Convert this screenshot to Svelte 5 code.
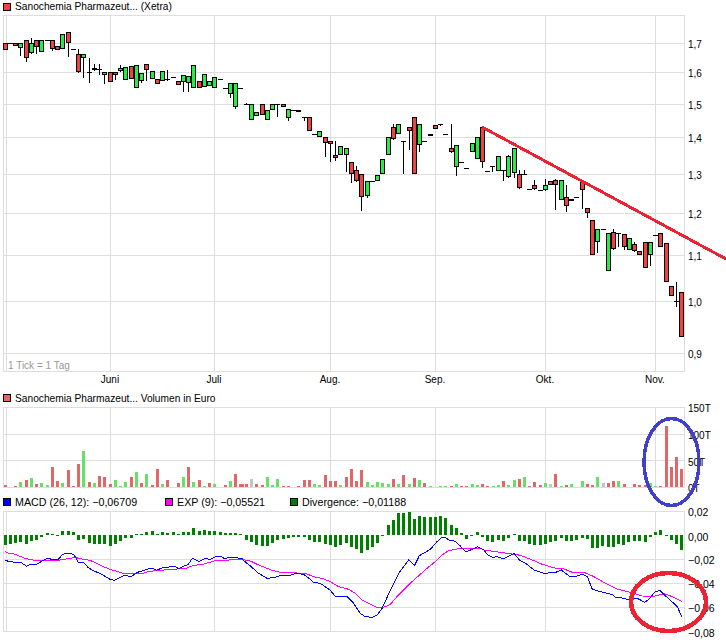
<script>
  // Readings are in 3x zoom coordinates per strip: [ox, oy, items]
  const candleStrips = [
    [0, 0, [
      ['r',16,130,151],['d',31,130],['r',46,130,139],['g',62,130,145,130,165],['r',79,121,175,121,182],
      ['g',94,130,160,114,160],['r',109,121,142,121,160],['g',124,121,157],['d',142,121],['r',157,121,148,121,151],
      ['r',172,139,151],['g',187,103,148],['r',205,97,130,97,169],['d',220,148],['r',235,163,217,148,217],
      ['g',250,163,175,163,230],['d',268,217,175,250],['D',283,205,193,214],['d',298,208,193,226],['g',313,217,226,217,250],
      ['r',331,217,247],['r',346,217,226,217,238],['g',361,205,214,196,214],['g',376,202,241],['r',394,199,238],
      ['g',409,196,265],['g',424,220,244,220,247],['r',439,193,211,193,241],['g',457,214,238],['r',472,238,253],
      ['g',487,214,244],['d',502,238,211,244],['d',520,232],['r',535,244,256],['g',550,226,247,226,274],
      ['g',565,229,250,229,274],['g',580,196,265],['r',598,244,265],['g',613,223,262],['g',628,244,259],
      ['g',643,232,265],['d',661,238],['d',676,265],['g',691,250,283,250,292],['g',706,250,322,250,325],['d',721,265]
    ]],
    [242, 90, [
      ['d',13,43,39,43],['g',28,43,91],['g',43,67,79],['r',61,43,76],['g',76,61,91],['g',91,43,61],
      ['d',106,43,43,80],['r',124,43,52],['g',139,58,85,58,89],['d',154,61],['D',169,62],['d',187,82,82,92],
      ['r',202,82,124],['d',217,133],['g',232,124,142],['r',250,142,160,142,197],['r',265,154,163,154,212],
      ['r',280,196,205,154,209],['g',295,169,196],['g',313,175,196,175,242],['r',328,217,253,217,275],
      ['r',343,241,274,228,274],['r',358,253,322,253,359],['g',376,274,319,274,322],['d',391,274],
      ['g',406,256,274],['g',421,208,253],['g',439,142,196],['r',454,112,148,102,148],['g',469,103,133],
      ['d',484,154,154,253],['r',502,112,124,112,176],['r',517,82,253],['g',532,103,166,103,183],['d',547,154],
      ['D',565,134],['r',580,106,118],['d',595,103,103,107],['d',610,133],['r',628,175,187,102,187],
      ['g',643,166,232,166,254],['d',658,217],['d',673,235],['g',691,160,187],['g',706,142,208],['r',721,112,217,112,230]
    ]],
    [484, 110, [
      ['d',10,185],['d',25,170,170,185],['g',43,139,184],['d',58,182,182,212],['g',73,139,202,135,202],
      ['g',91,115,190,115,202],['r',106,193,235,181,235],['d',121,193,181,196],['d',136,238],['r',151,226,238,211,238],
      ['d',169,241],['g',184,226,241,208,241],['r',199,214,226],['r',214,211,226,208,298],['g',232,211,271],
      ['r',247,262,289,226,304],['D',262,268],['d',277,262],['r',295,214,241,214,295],['r',310,295,310,295,322]
    ]],
    [560, 220, [
      ['r',97,0,106],['g',112,28,67,28,95],['d',130,28],['g',145,40,154],['r',160,37,88,28,88],
      ['d',175,40,40,80],['r',193,43,82,43,86],['g',208,55,91],['r',223,73,94,67,94],['r',238,94,106],
      ['r',256,67,145],['g',271,67,106,67,134],['d',286,46],['r',301,40,82],['r',319,70,187],
      ['r',334,199,229],['d',349,244,186,260],['r',364,217,352]
    ]]
  ];

  const candles = candleStrips.flatMap(([ox, oy, items]) =>
    items.map(([kind, z, a, b, c, d]) => {
      const x = Math.floor(ox + z / 3);
      if (kind === 'd' || kind === 'D') {
        const y = Math.floor(oy + a / 3);
        return {
          kind, x, y,
          wt: b !== undefined ? Math.floor(oy + b / 3) : null,
          wb: c !== undefined ? Math.round(oy + c / 3) : null
        };
      }
      const top = Math.floor(oy + a / 3);
      const bot = Math.round(oy + b / 3) - 1;
      return {
        kind, x, top, bot,
        wt: c !== undefined ? Math.floor(oy + c / 3) : top,
        wb: d !== undefined ? Math.round(oy + d / 3) : bot
      };
    })
  );

  const volStrips = [
    [0, 385, 307, [
      [16,'r',300],[46,'r',303],[61,'g',291],[79,'r',285],[94,'g',279],[109,'r',297],[124,'g',294],[142,'g',300],
      [157,'r',246],[172,'r',288],[187,'g',294],[205,'r',255],[220,'r',303],[235,'r',237],[250,'g',198],[268,'r',291],
      [283,'g',294],[298,'r',273],[313,'r',276],[331,'r',297],[346,'g',285],[361,'g',303],[376,'g',291],[394,'r',276],
      [409,'g',261],[424,'r',294],[439,'g',267],[457,'r',300],[472,'r',252],[487,'g',297],[502,'r',285],[535,'r',294],
      [550,'g',276],[565,'r',246],[580,'g',291],[598,'r',285],[613,'g',303],[628,'r',294],[643,'g',297],[676,'r',300],
      [691,'g',288],[706,'r',267],[721,'r',297]
    ]],
    [242, 450, 112, [
      [1,'r',102],[14,'r',102],[28,'y',87],[43,'r',102],[61,'r',105],[76,'g',81],[91,'g',105],[106,'g',87],[124,'r',108],
      [139,'r',108],[169,'r',108],[187,'r',90],[202,'r',90],[217,'g',102],[232,'g',105],[250,'r',75],[265,'r',93],
      [280,'r',93],[295,'g',105],[313,'r',81],[328,'r',57],[343,'r',93],[358,'r',60],[376,'g',96],[391,'g',105],
      [406,'g',96],[421,'g',99],[439,'g',102],[454,'r',87],[469,'g',102],[484,'r',75],[502,'g',102],[517,'r',84],
      [532,'g',90],[547,'r',99],[565,'g',108],[595,'g',108],[610,'g',108],[628,'r',108],[643,'g',102],[658,'r',108],
      [673,'r',108],[691,'g',102],[706,'g',105],[721,'r',102]
    ]],
    [484, 400, 262, [
      [10,'r',258],[28,'g',258],[43,'g',255],[58,'r',243],[73,'g',255],[91,'g',240],[106,'r',237],[121,'g',231],
      [136,'r',258],[151,'r',246],[169,'r',255],[184,'g',249],[199,'y',252],[214,'r',222],[232,'g',258],[247,'r',255],
      [262,'g',252],[295,'g',243],[310,'r',252],[325,'r',255],[340,'g',231],[358,'y',249],[373,'r',249],[388,'r',243],
      [403,'g',243],[421,'r',252],[451,'r',252],[466,'r',255],[484,'r',255],[499,'g',249],[514,'g',258],[529,'r',258],
      [547,'r',78],[562,'r',201],[577,'r',171],[592,'r',207]
    ]]
  ];

  const volBars = volStrips.flatMap(([ox, oy, base, items]) =>
    items.map(([z, c, t]) => {
      const top = Math.round(oy + t / 3);
      return { x: Math.floor(ox + z / 3) - 1, y: top, h: Math.max(1, 487 - top), c };
    })
  );

  // Divergence: signed value = end of the bar in zoom px, relative to the strip
  const divStrips = [
    [0, [[16,75],[31,72],[46,70],[61,67],[79,72],[94,64],[109,61],[124,52],[142,39],[157,42],[172,45],[187,33],[205,33],
      [220,36],[235,60],[250,57],[268,69],[283,72],[298,72],[313,72],[331,78],[346,72],[361,63],[376,55],[394,54],[409,42],
      [424,42],[439,36],[457,33],[472,42],[487,36],[502,39],[520,36],[535,42],[550,36],[565,36],[580,24],[598,33],[613,30],
      [628,33],[643,33],[661,36],[676,39],[691,39],[706,39],[721,42]]],
    [242, [[13,60],[28,67],[43,75],[61,78],[76,78],[91,69],[106,60],[124,57],[139,54],[154,51],[169,51],[187,51],[202,60],
      [217,66],[232,66],[250,72],[265,75],[280,81],[295,75],[313,69],[328,81],[343,87],[358,99],[376,90],[391,81],[406,69],
      [421,48],[439,15],[454,0],[469,-20],[484,-21],[502,-25],[517,-2],[532,-12],[547,-10],[565,-9],[580,-9],[595,-12],
      [610,-5],[628,15],[643,24],[658,39],[673,57],[688,48],[706,36],[721,51]]],
    [484, [[10,63],[25,66],[43,60],[58,63],[73,54],[91,42],[106,63],[121,63],[136,72],[151,75],[169,75],[184,72],[199,66],
      [214,63],[232,54],[247,63],[262,63],[277,60],[295,54],[310,57],[325,84],[340,84],[355,78],[373,81],[388,81],[403,72],
      [418,75],[433,66],[451,63],[466,63],[484,66],[499,51],[514,36],[529,30],[547,45],[562,60],[577,72],[592,90]]]
  ];

  const divBars = divStrips.flatMap(([ox, items]) =>
    items.map(([z, v]) => {
      const end = Math.round(520 + v / 3);
      const y = Math.min(535, end);
      return { x: Math.floor(ox + z / 3) - 1, y, h: Math.max(1, Math.abs(end - 535)) };
    })
  );

  const toPts = (ox, arr) => arr.map(([x, y]) => `${ox + x / 3},${520 + y / 3}`).join(' ');

  const macd = [
    toPts(0, [[15,120],[25,124],[38,124],[40,127],[62,127],[70,132],[80,139],[92,133],[108,133],[120,127],[135,118],[145,115],[155,118],[175,118],[188,103],[200,100],[212,100],[222,104],[235,127],[250,127],[265,143],[278,151],[305,163],[330,178],[342,181],[355,175],[370,167],[382,167],[390,170],[398,167],[412,157],[430,152],[445,147],[460,146],[470,151],[490,142],[505,142],[515,139],[525,139],[535,146],[550,139],[565,133],[577,115],[585,118],[597,124],[615,115],[630,118],[650,109],[662,109],[672,115],[700,112],[726,116]]),
    toPts(242, [[0,118],[25,138],[50,160],[75,175],[100,172],[115,167],[145,166],[160,160],[185,163],[205,178],[215,187],[235,190],[265,211],[280,229],[315,229],[335,250],[355,280],[370,290],[390,292],[405,286],[420,266],[445,210],[470,160],[500,120],[518,136],[532,107],[565,88],[585,65],[600,52],[610,53],[622,60],[640,64],[655,78],[672,96],[690,88],[707,80],[726,90]]),
    toPts(484, [[10,104],[25,112],[40,110],[58,117],[75,108],[90,100],[108,122],[125,130],[150,150],[180,160],[215,157],[232,150],[255,168],[275,170],[295,162],[310,170],[325,208],[350,215],[385,224],[395,233],[410,233],[430,238],[460,235],[482,247],[498,235],[512,216],[527,211],[545,228],[580,260],[593,290]])
  ].join(' ');

  const exp = [
    toPts(0, [[15,94],[25,99],[48,103],[60,109],[75,115],[100,120],[125,122],[175,121],[190,118],[212,115],[225,112],[240,116],[270,121],[290,130],[310,140],[330,148],[350,154],[370,160],[400,160],[430,160],[448,154],[480,151],[530,147],[560,144],[580,136],[605,134],[625,128],[650,121],[680,121],[700,118],[726,118]]),
    toPts(242, [[25,123],[50,135],[90,151],[115,157],[190,160],[215,170],[240,175],[265,185],[290,200],[320,208],[340,220],[360,240],[385,252],[405,262],[425,262],[445,253],[465,230],[510,185],[555,145],[580,125],[600,105],[620,92],[655,85],[690,87],[712,84],[726,90]]),
    toPts(484, [[50,97],[110,106],[145,120],[175,133],[215,145],[240,147],[265,157],[300,157],[330,170],[365,190],[400,207],[440,217],[475,228],[510,229],[540,221],[565,230],[593,244]])
  ].join(' ');

  const gridX = [3, 6, 110, 214, 330, 435, 545, 655, 684];
  const priceY = [15, 43, 72, 104, 137, 174, 213, 255, 301, 353, 371];
  const volY = [407, 434, 460, 487];
  const macdY = [511, 559, 583, 607, 631];

  const priceLabels = [['1,7',48],['1,6',77],['1,5',109],['1,4',142],['1,3',179],['1,2',218],['1,1',260],['1,0',306],['0,9',358]];
  const volLabels = [['150T',412],['100T',439],['50T',466],['0T',492]];
  const macdLabels = [['0,02',516],['0,00',541],['−0,02',564],['−0,04',588],['−0,06',612],['−0,08',637]];
  const months = [['Juni',110],['Juli',214],['Aug.',330],['Sep.',435],['Okt.',545],['Nov.',655]];
</script>

<div class="chart">
  <div class="legend first">
    <span class="item"><i class="swatch s-red"></i>Sanochemia Pharmazeut... (Xetra)</span>
  </div>

  <svg class="panel" width="726" height="375" viewBox="0 15 726 375">
    {#each priceY as y}<line class="grid" x1="3" x2="684" y1={y + 0.5} y2={y + 0.5} />{/each}
    {#each gridX as x}<line class="grid" x1={x + 0.5} x2={x + 0.5} y1="15" y2="372" />{/each}

    {#each candles as c}
      {#if c.kind === 'd' || c.kind === 'D'}
        {#if c.wt !== null}<line class="ink" x1={c.x + 0.5} x2={c.x + 0.5} y1={c.wt} y2={c.wb} />{/if}
        <rect class="fill-ink" x={c.x - 2} y={c.y} width="5" height={c.kind === 'D' ? 2 : 1} />
      {:else}
        <line class="ink" x1={c.x + 0.5} x2={c.x + 0.5} y1={c.wt} y2={c.wb + 1} />
        <rect class={c.kind === 'r' ? 'body-red' : 'body-green'} x={c.x - 1.5} y={c.top + 0.5} width="4" height={c.bot - c.top} />
      {/if}
    {/each}

    <line class="trend" x1="482" y1="127" x2="726" y2="259" />

    <text class="note" x="8" y="369">1 Tick = 1 Tag</text>
    {#each priceLabels as [t, y]}<text class="axis" x="688" {y}>{t}</text>{/each}
    {#each months as [t, x]}<text class="axis mid" {x} y="383">{t}</text>{/each}
  </svg>

  <div class="legend second">
    <span class="item"><i class="swatch s-vol"></i>Sanochemia Pharmazeut... Volumen in Euro</span>
  </div>

  <svg class="panel" width="726" height="90" viewBox="0 405 726 90">
    {#each volY as y}<line class="grid" x1="3" x2="684" y1={y + 0.5} y2={y + 0.5} />{/each}
    {#each gridX as x}<line class="grid" x1={x + 0.5} x2={x + 0.5} y1="407" y2="488" />{/each}
    {#each volBars as b}
      <rect class={'vol-' + b.c} x={b.x} y={b.y} width="3" height={b.h} />
    {/each}
    {#each volLabels as [t, y]}<text class="axis" x="688" {y}>{t}</text>{/each}
    <ellipse class="ring-blue" cx="671.5" cy="462" rx="27.5" ry="43.5" />
  </svg>

  <div class="legend third">
    <span class="item w1"><i class="swatch s-blue"></i>MACD (26, 12): −0,06709</span>
    <span class="item w2"><i class="swatch s-magenta"></i>EXP (9): −0,05521</span>
    <span class="item"><i class="swatch s-green"></i>Divergence: −0,01188</span>
  </div>

  <svg class="panel" width="726" height="131" viewBox="0 509 726 131">
    {#each macdY as y}<line class="grid" x1="3" x2="684" y1={y + 0.5} y2={y + 0.5} />{/each}
    {#each gridX as x}<line class="grid" x1={x + 0.5} x2={x + 0.5} y1="511" y2="632" />{/each}
    {#each divBars as b}
      <rect class="div" x={b.x} y={b.y} width="3" height={b.h} />
    {/each}
    <polyline class="line-exp" points={exp} />
    <polyline class="line-macd" points={macd} />
    {#each macdLabels as [t, y]}<text class="axis macd-axis" x="688" {y}>{t}</text>{/each}
    <ellipse class="ring-red" cx="668.5" cy="602" rx="37.5" ry="29" />
  </svg>
</div>

<style>
  :global(body) {
    margin: 0;
    background: #fff;
  }
  .chart {
    width: 726px;
    height: 640px;
    overflow: hidden;
    display: flex;
    flex-direction: column;
    font-family: "Liberation Sans", Arial, sans-serif;
    font-size: 10.2px;
    color: #000;
  }
  .legend {
    display: flex;
    align-items: center;
    padding-left: 3px;
    flex: none;
    white-space: nowrap;
  }
  .first {
    height: 13px;
    margin-bottom: 2px;
  }
  .second {
    height: 14px;
    margin-top: 1px;
  }
  .third {
    height: 14px;
    font-size: 10.7px;
  }
  .item {
    display: flex;
    align-items: center;
    gap: 4px;
    flex: none;
  }
  .w1 {
    width: 162px;
  }
  .w2 {
    width: 125px;
  }
  .swatch {
    width: 8px;
    height: 8px;
    box-sizing: border-box;
    border: 1px solid #000;
    flex: none;
  }
  .s-red { background: #f04040; }
  .s-vol { background: #e06868; }
  .s-blue { background: #0000ff; }
  .s-magenta { background: #ff00ff; }
  .s-green { background: #008000; }

  .panel {
    display: block;
    flex: none;
    overflow: visible;
  }
  .grid {
    stroke: #dddddd;
    stroke-width: 1;
    shape-rendering: crispEdges;
  }
  .ink {
    stroke: #000;
    stroke-width: 1;
    shape-rendering: crispEdges;
  }
  .fill-ink { fill: #000; shape-rendering: crispEdges; }
  .body-red, .body-green {
    stroke: #000;
    stroke-width: 1;
    shape-rendering: crispEdges;
  }
  .body-red { fill: #f04040; }
  .body-green { fill: #22ee44; }
  .vol-r, .vol-g, .vol-y, .div { shape-rendering: crispEdges; }
  .vol-r { fill: #e06868; }
  .vol-g { fill: #68e068; }
  .vol-y { fill: #c4c4c4; }
  .div { fill: #008000; }
  .trend {
    stroke: #ee2233;
    stroke-width: 3;
    shape-rendering: crispEdges;
  }
  .line-macd, .line-exp {
    fill: none;
    stroke-width: 1;
    shape-rendering: crispEdges;
  }
  .line-macd { stroke: #0000ff; }
  .line-exp { stroke: #ff00ff; }
  .ring-blue {
    fill: none;
    stroke: #4040cc;
    stroke-width: 3.5;
    shape-rendering: crispEdges;
  }
  .ring-red {
    fill: none;
    stroke: #ee2233;
    stroke-width: 4.5;
    shape-rendering: crispEdges;
  }
  .axis {
    font-size: 10px;
    fill: #000;
  }
  .macd-axis { font-size: 10.5px; }
  .mid { text-anchor: middle; }
  .note {
    font-size: 10px;
    fill: #999;
  }
</style>
